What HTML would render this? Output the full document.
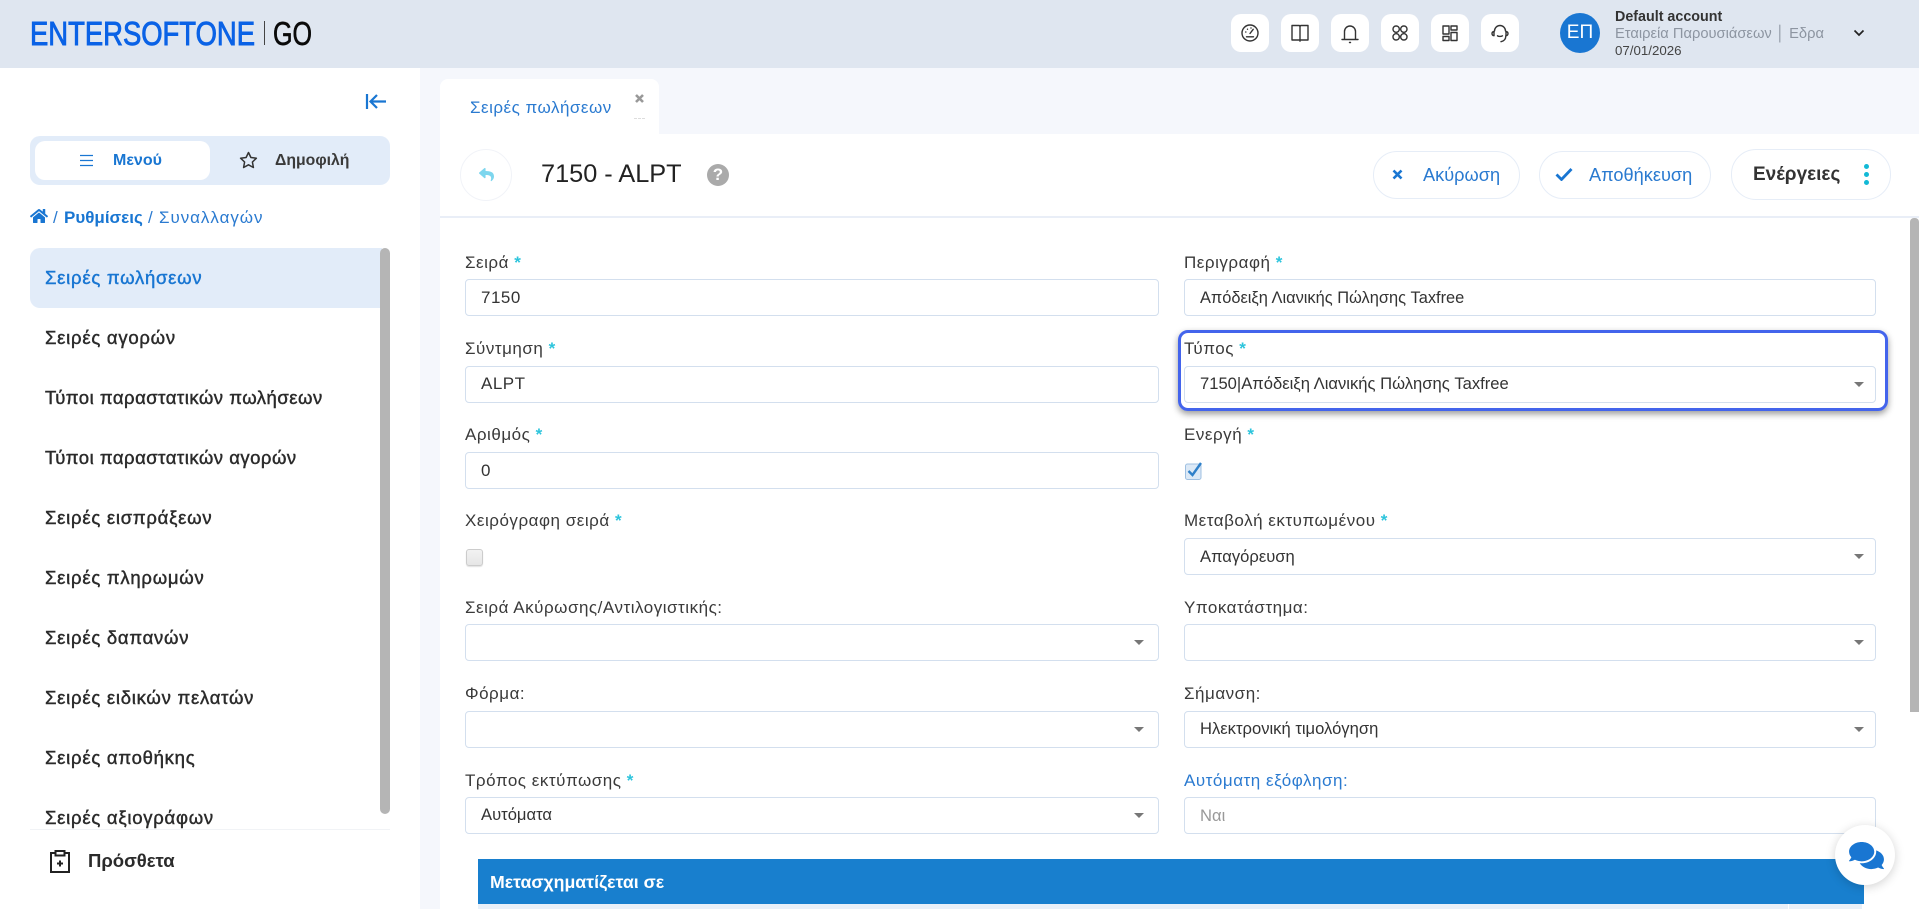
<!DOCTYPE html>
<html lang="el"><head><meta charset="utf-8"><title>Σειρές πωλήσεων</title>
<style>
html,body{margin:0;padding:0;width:1919px;height:909px;overflow:hidden;background:#f5f7fc;font-family:"Liberation Sans","Noto Sans CJK SC",sans-serif;color:#333}
.a,.t,.l,.in,.sel,.m,.hb{position:absolute}
.t,.l,.m{white-space:nowrap;line-height:20px;height:20px}
svg{position:absolute;display:block}
.hb{width:38px;height:38px;top:14px;background:#fff;border-radius:10px}
.hb svg{left:7px;top:7px;width:24px;height:24px;fill:none;stroke:#333;stroke-width:1.4;stroke-linecap:round;stroke-linejoin:round}
.m{left:45px;font-size:18.5px;letter-spacing:.75px;color:#2b2b2b;-webkit-text-stroke:.45px #2b2b2b}
.l{font-size:17px;letter-spacing:.52px;color:#3a3a3a}
.l i{font-style:normal;color:#2cc4dc;font-weight:bold}
.in,.sel{height:35px;border:1px solid #d3dfee;border-radius:4px;background:#fff;font-size:16.6px;line-height:36px;color:#333;padding-left:15px;box-sizing:content-box}
.L{left:465px;width:677px}
.R{left:1184px;width:675px}
.up{line-height:34px}
.sel:after{content:"";position:absolute;right:14px;top:15px;border-left:5px solid transparent;border-right:5px solid transparent;border-top:5.5px solid #777}
.sel.R:after{right:11px}
.btn{position:absolute;box-sizing:border-box;border:1px solid #e6edf7;border-radius:25px;background:#fff}
</style></head><body>

<!-- Header -->
<div class="a" style="left:0;top:0;width:1919px;height:68px;background:#dfe6f0"></div>
<svg style="left:28px;top:16px" width="290" height="34" viewBox="0 0 290 34">
<text x="2" y="29" font-family="Liberation Sans" font-size="33" fill="#0a62e6" stroke="#0a62e6" stroke-width=".9" textLength="225" lengthAdjust="spacingAndGlyphs">ENTERSOFTONE</text>
<rect x="236" y="5" width="1" height="24" fill="#444"/>
<text x="245" y="29" font-family="Liberation Sans" font-size="33" fill="#0a0a0a" stroke="#0a0a0a" stroke-width=".6" textLength="39" lengthAdjust="spacingAndGlyphs">GO</text>
</svg>

<div class="hb" style="left:1231px"><svg viewBox="0 0 24 24"><circle cx="12" cy="12" r="8"/><path d="M12 12.500l3.200-4.200M7.800 11v.1M9.500 8.200v.1M13 7v.1M8.500 15.800h7"/></svg></div>
<div class="hb" style="left:1281px"><svg viewBox="0 0 24 24"><path d="M4 4.500h7c.5 0 1 .3 1 1 0-.7.500-1 1-1h7v14.500h-8v1.200M4 4.500v14.500h8"/><path d="M12 5.500v13.500"/></svg></div>
<div class="hb" style="left:1331px"><svg viewBox="0 0 24 24"><path d="M6.500 18.500V10.500a5.500 5.500 0 0 1 11 0v8M4 18.500h16M11.500 21.500h1"/></svg></div>
<div class="hb" style="left:1381px"><svg viewBox="0 0 24 24"><rect x="5" y="5" width="6.300" height="6.300" rx="3"/><rect x="12.700" y="5" width="6.300" height="6.300" rx="3"/><rect x="5" y="12.700" width="6.300" height="6.300" rx="3"/><rect x="12.700" y="12.700" width="6.300" height="6.300" rx="3"/></svg></div>
<div class="hb" style="left:1431px"><svg viewBox="0 0 24 24"><rect x="5" y="5" width="6" height="8"/><rect x="13" y="5" width="6" height="4"/><rect x="5" y="15.500" width="6" height="4"/><rect x="13" y="11.500" width="6" height="8"/></svg></div>
<div class="hb" style="left:1481px"><svg viewBox="0 0 24 24"><path d="M6.500 10a5.500 5.500 0 0 1 11 0M9.500 14.800c1 .9 3.500.9 5 0M17.800 15c0 3-1.800 5-4.800 5.700"/><path d="M6 10.500c-1.400.2-2 1-2 2.100s.6 1.900 2 2.100zM18 10.500c1.400.2 2 1 2 2.100s-.6 1.900-2 2.100z"/></svg></div>

<div class="a" style="left:1560px;top:13px;width:40px;height:40px;border-radius:50%;background:#1976d2;color:#fff;font-size:19px;line-height:40px;text-align:center">ΕΠ</div>
<div class="t" style="left:1615px;top:7px;font-size:14.300px;font-weight:bold;color:#333">Default account</div>
<div class="t" style="left:1615px;top:24px;font-size:14.700px;color:#8d95a1">Εταιρεία Παρουσιάσεων │ Εδρα</div>
<div class="t" style="left:1615px;top:41px;font-size:13.300px;color:#444">07/01/2026</div>
<svg style="left:1853px;top:28px" width="12" height="10" viewBox="0 0 12 10"><path d="M1.500 2.500L6 7l4.500-4.500" fill="none" stroke="#222" stroke-width="1.700"/></svg>

<!-- Sidebar -->
<div class="a" style="left:0;top:68px;width:420px;height:841px;background:#fff"></div>
<svg style="left:365px;top:92px" width="22" height="20" viewBox="0 0 22 20"><path d="M2 2v15M21 9.500H6M12 3L5.500 9.500 12 16" fill="none" stroke="#1976d2" stroke-width="2.200"/></svg>

<div class="a" style="left:30px;top:136px;width:360px;height:49px;background:#e2ecf9;border-radius:10px"></div>
<div class="a" style="left:35px;top:141px;width:175px;height:39px;background:#fff;border-radius:10px"></div>
<svg style="left:79px;top:154px" width="15" height="13" viewBox="0 0 15 13"><path d="M1 1.500h13M1 6.500h13M1 11.500h13" stroke="#1976d2" stroke-width="1.200" fill="none"/></svg>
<div class="t" style="left:113px;top:151px;font-size:16px;font-weight:bold;color:#1976d2">Μενού</div>
<svg style="left:239px;top:151px" width="19" height="18" viewBox="0 0 19 18"><path d="M9.500 1.500l2.400 5 5.500.7-4 3.800 1 5.500-4.900-2.700-4.900 2.700 1-5.500-4-3.800 5.500-.7z" fill="none" stroke="#333" stroke-width="1.500" stroke-linejoin="round"/></svg>
<div class="t" style="left:275px;top:151px;font-size:15.800px;font-weight:bold;color:#3a3a3a">Δημοφιλή</div>

<svg style="left:30px;top:208px" width="18" height="16" viewBox="0 0 576 512" fill="#1976d2"><path d="M280.37 148.26L96 300.11V464a16 16 0 0 0 16 16l112.06-.29a16 16 0 0 0 15.92-16V368a16 16 0 0 1 16-16h64a16 16 0 0 1 16 16v95.64a16 16 0 0 0 16 16.05L464 480a16 16 0 0 0 16-16V300L295.67 148.26a12.19 12.19 0 0 0-15.3 0zM571.6 251.47L488 182.56V44.05a12 12 0 0 0-12-12h-56a12 12 0 0 0-12 12v72.61L318.47 43a48 48 0 0 0-61 0L4.34 251.47a12 12 0 0 0-1.6 16.9l25.5 31A12 12 0 0 0 45.15 301l235.22-193.74a12.19 12.19 0 0 1 15.3 0L530.9 301a12 12 0 0 0 16.9-1.6l25.5-31a12 12 0 0 0-1.7-16.93z"/></svg>
<div class="t" style="left:53px;top:208px;font-size:17px;color:#2a7ad0">/</div>
<div class="t" style="left:64px;top:208px;font-size:17px;font-weight:bold;color:#1976d2">Ρυθμίσεις</div>
<div class="t" style="left:148px;top:208px;font-size:17px;color:#2a7ad0">/</div>
<div class="t" style="left:159px;top:208px;font-size:17px;color:#2a7ad0;letter-spacing:.95px">Συναλλαγών</div>

<div class="a" style="left:30px;top:248px;width:352px;height:60px;background:#e2ecf9;border-radius:10px 0 0 10px"></div>
<div class="a" style="left:0;top:248px;width:420px;height:581px;overflow:hidden">
<div class="m" style="top:20px;color:#1976d2;-webkit-text-stroke:.45px #1976d2">Σειρές πωλήσεων</div>
<div class="m" style="top:80px">Σειρές αγορών</div>
<div class="m" style="top:140px;letter-spacing:.5px">Τύποι παραστατικών πωλήσεων</div>
<div class="m" style="top:200px;letter-spacing:.5px">Τύποι παραστατικών αγορών</div>
<div class="m" style="top:260px">Σειρές εισπράξεων</div>
<div class="m" style="top:320px">Σειρές πληρωμών</div>
<div class="m" style="top:380px">Σειρές δαπανών</div>
<div class="m" style="top:440px">Σειρές ειδικών πελατών</div>
<div class="m" style="top:500px">Σειρές αποθήκης</div>
<div class="m" style="top:560px">Σειρές αξιογράφων</div>
</div>
<div class="a" style="left:380px;top:248px;width:10px;height:566px;background:#b5b5b5;border-radius:5px"></div>
<div class="a" style="left:30px;top:829px;width:360px;height:1px;background:#f1f3f6"></div>
<svg style="left:49px;top:849px" width="22" height="25" viewBox="0 0 22 25"><path d="M6.500 4H2v19h18V4h-4.500M6.500 2h9v4.500h-9zM11 11.500v6M8 14.500h6" fill="none" stroke="#222" stroke-width="2"/></svg>
<div class="t" style="left:88px;top:851px;font-size:18.500px;font-weight:bold;color:#2b2b2b">Πρόσθετα</div>

<!-- Tab + card -->
<div class="a" style="left:440px;top:79px;width:219px;height:60px;background:#fff;border-radius:8px 8px 0 0"></div>
<div class="t" style="left:470px;top:98px;font-size:17px;color:#2a7ad0;letter-spacing:.5px">Σειρές πωλήσεων</div>
<svg style="left:634px;top:93px" width="11" height="11" viewBox="0 0 11 11"><path d="M2 2l7 7M9 2l-7 7" stroke="#999" stroke-width="2.600" fill="none"/></svg>
<div class="a" style="left:634px;top:118px;width:11px;height:1px;border-top:1px dashed #ddd"></div>
<div class="a" style="left:440px;top:134px;width:1479px;height:775px;background:#fff"></div>

<div class="a" style="left:460px;top:149px;width:50px;height:50px;border:1px solid #f1f3f8;border-radius:50%"></div>
<svg style="left:479px;top:167px" width="15" height="15" viewBox="0 0 512 512" fill="#7dd6ee"><path d="M8.309 189.836L184.313 37.851C199.719 24.546 224 35.347 224 56.015v80.053c160.629 1.839 288 34.032 288 186.258 0 61.441-39.581 122.309-83.333 154.132-13.653 9.931-33.111-2.533-28.077-18.631 45.344-145.012-21.507-183.51-176.59-185.742V360c0 20.7-24.3 31.453-39.687 18.164l-176.004-152c-11.071-9.562-11.086-26.753 0-36.328z"/></svg>
<div class="t" style="left:541px;top:159px;height:30px;line-height:30px;font-size:25.300px;color:#222">7150 - ALPT</div>
<div class="a" style="left:707px;top:164px;width:22px;height:22px;border-radius:50%;background:#aaa;color:#fff;font-size:17px;font-weight:bold;line-height:22px;text-align:center">?</div>

<div class="btn" style="left:1373px;top:151px;width:147px;height:48px"></div>
<svg style="left:1392px;top:169px" width="11" height="11" viewBox="0 0 11 11"><path d="M1.500 1.500l8 8M9.500 1.500l-8 8" stroke="#1976d2" stroke-width="2.600" fill="none"/></svg>
<div class="t" style="left:1423px;top:165px;font-size:18.200px;color:#2a7ad0">Ακύρωση</div>
<div class="btn" style="left:1539px;top:151px;width:172px;height:48px"></div>
<svg style="left:1555px;top:167px" width="18" height="14" viewBox="0 0 18 14"><path d="M1.500 7.500l5 5L16.500 2" stroke="#1976d2" stroke-width="2.800" fill="none"/></svg>
<div class="t" style="left:1589px;top:165px;font-size:18.200px;color:#2a7ad0">Αποθήκευση</div>
<div class="btn" style="left:1731px;top:149px;width:160px;height:51px"></div>
<div class="t" style="left:1753px;top:165px;font-size:19px;font-weight:bold;color:#333">Ενέργειες</div>
<div class="a" style="left:1863.500px;top:164px;width:5px;height:5px;border-radius:50%;background:#12b9d6"></div>
<div class="a" style="left:1863.500px;top:172px;width:5px;height:5px;border-radius:50%;background:#12b9d6"></div>
<div class="a" style="left:1863.500px;top:180px;width:5px;height:5px;border-radius:50%;background:#12b9d6"></div>
<div class="a" style="left:440px;top:216px;width:1479px;height:2px;background:#e9eef7"></div>

<!-- Form left -->
<div class="l" style="left:465px;top:253px">Σειρά <i>*</i></div>
<div class="in L" style="top:279px;font-size:17px;letter-spacing:.5px">7150</div>
<div class="l" style="left:465px;top:339px">Σύντμηση <i>*</i></div>
<div class="in L up" style="top:366px;font-size:17px;letter-spacing:.5px">ALPT</div>
<div class="l" style="left:465px;top:425px">Αριθμός <i>*</i></div>
<div class="in L" style="top:452px;font-size:17px">0</div>
<div class="l" style="left:465px;top:511px">Χειρόγραφη σειρά <i>*</i></div>
<div class="a" style="left:466px;top:549px;width:15px;height:15px;border:1px solid #ccc;border-radius:3px;background:linear-gradient(#f2f2f2,#e6e6e6);box-shadow:0 1px 1px rgba(0,0,0,.12)"></div>
<div class="l" style="left:465px;top:598px">Σειρά Ακύρωσης/Αντιλογιστικής:</div>
<div class="sel L" style="top:624px"></div>
<div class="l" style="left:465px;top:684px">Φόρμα:</div>
<div class="sel L" style="top:711px"></div>
<div class="l" style="left:465px;top:771px">Τρόπος εκτύπωσης <i>*</i></div>
<div class="sel L up" style="top:797px">Αυτόματα</div>

<!-- Form right -->
<div class="l" style="left:1184px;top:253px">Περιγραφή <i>*</i></div>
<div class="in R" style="top:279px;font-size:16.400px">Απόδειξη Λιανικής Πώλησης Taxfree</div>
<div class="a" style="left:1178px;top:330px;width:710px;height:81px;box-sizing:border-box;border:3px solid #4364ec;border-radius:10px;box-shadow:0 3px 7px rgba(0,0,0,.4)"></div>
<div class="l" style="left:1184px;top:339px">Τύπος <i>*</i></div>
<div class="sel R up" style="top:366px">7150|Απόδειξη Λιανικής Πώλησης Taxfree</div>
<div class="l" style="left:1184px;top:425px">Ενεργή <i>*</i></div>
<svg style="left:1184px;top:460px" width="20" height="21" viewBox="0 0 20 21"><rect x="1.500" y="4" width="15.500" height="15.500" rx="2" fill="#dce9f6" stroke="#9fc0e2"/><path d="M4.500 11l4 4L17 3" fill="none" stroke="#2f80c9" stroke-width="2.400"/></svg>
<div class="l" style="left:1184px;top:511px">Μεταβολή εκτυπωμένου <i>*</i></div>
<div class="sel R" style="top:538px">Απαγόρευση</div>
<div class="l" style="left:1184px;top:598px">Υποκατάστημα:</div>
<div class="sel R" style="top:624px"></div>
<div class="l" style="left:1184px;top:684px">Σήμανση:</div>
<div class="sel R up" style="top:711px">Ηλεκτρονική τιμολόγηση</div>
<div class="l" style="left:1184px;top:771px;color:#2a7ad0">Αυτόματη εξόφληση:</div>
<div class="in R" style="top:797px;color:#999">Ναι</div>

<!-- Table head -->
<div class="a" style="left:478px;top:859px;width:1386px;height:45px;background:#187fce"></div>
<div class="t" style="left:490px;top:872px;font-size:17.700px;font-weight:bold;color:#fff">Μετασχηματίζεται σε</div>
<div class="a" style="left:478px;top:904px;width:1310px;height:5px;background:#e8f0f9"></div>
<div class="a" style="left:1789px;top:904px;width:73px;height:5px;background:#e8f0f9"></div>

<!-- Page scrollbar -->
<div class="a" style="left:1910px;top:218px;width:9px;height:494px;background:#b5b5b5;border-radius:4px 4px 0 0"></div>

<!-- Chat -->
<div class="a" style="left:1835px;top:825px;width:60px;height:60px;border-radius:50%;background:#fff;box-shadow:0 2px 10px rgba(0,0,0,.18)"></div>
<svg style="left:1849px;top:840px" width="35" height="31" viewBox="0 0 576 512" fill="#1976d2"><path d="M416 192c0-88.4-93.1-160-208-160S0 103.6 0 192c0 34.3 14.1 65.9 38 92-13.4 30.2-35.5 54.2-35.800 54.500-2.200 2.300-2.800 5.700-1.500 8.700S4.800 352 8 352c36.600 0 66.900-12.300 88.700-25 32.200 15.700 70.300 25 111.300 25 114.900 0 208-71.600 208-160zm122 220c23.900-26 38-57.700 38-92 0-66.900-53.500-124.200-129.300-148.100.9 6.600 1.300 13.300 1.300 20.100 0 105.900-107.700 192-240 192-10.800 0-21.300-.8-31.700-1.900C207.800 439.600 281.800 480 368 480c41 0 79.100-9.200 111.300-25 21.800 12.700 52.100 25 88.700 25 3.200 0 6.100-1.900 7.300-4.800 1.300-2.900.7-6.300-1.500-8.700-.3-.3-22.400-24.200-35.800-54.500z"/></svg>
</body></html>
